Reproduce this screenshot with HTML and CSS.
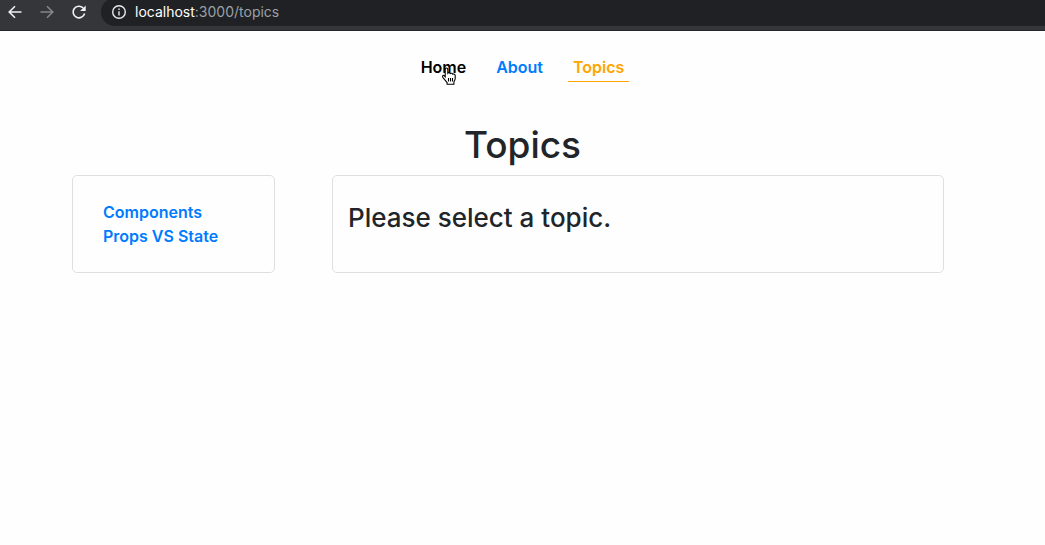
FILE: index.html
```html
<!DOCTYPE html>
<html lang="en">
<head>
<meta charset="utf-8">
<meta name="viewport" content="width=device-width, initial-scale=1">
<title>Topics</title>
<link rel="stylesheet" href="styles.css">
</head>
<body>
<div class="toolbar">
  <button class="tool" type="button" aria-label="Back">
    <svg viewBox="0 0 16 16" width="16" height="16"><path d="M14.5 8H2.5M8 2.2L2.2 8L8 13.8"/></svg>
  </button>
  <button class="tool tool-off" type="button" aria-label="Forward" disabled>
    <svg viewBox="0 0 16 16" width="16" height="16"><path d="M1.5 8H13.5M8 2.2L13.8 8L8 13.8"/></svg>
  </button>
  <button class="tool" type="button" aria-label="Reload">
    <svg viewBox="0 0 16 16" width="16" height="16"><path d="M13.6 9.5A5.8 5.8 0 1 1 12.2 4"/><path class="solid" d="M14.7 1.4V7H9.1Z"/></svg>
  </button>
  <div class="omnibox">
    <svg class="info" viewBox="0 0 16 16" width="16" height="16"><circle cx="8" cy="8" r="6.3"/><path d="M8 7.2V11.4M8 4.4V6"/></svg>
    <div class="address" role="textbox" aria-label="Address" contenteditable="true" spellcheck="false"><span class="host">localhost</span>:3000/topics</div>
  </div>
</div>
<nav class="nav">
  <a class="nav-link hovered" href="#home">Home
    <svg class="pointer" viewBox="0 0 16 18" width="16" height="18"><path d="M4.2 9.8V2.4C4.2 .5 6.8 .5 6.8 2.4V6.2C7.6 5.3 9 5.6 9.3 6.6C10.2 5.9 11.5 6.2 11.8 7.2C12.9 6.7 14.2 7.4 14.2 8.6V11.5C14.2 13.2 13 14.3 12.9 15V17.3H6.1V15.6C5.1 14 3.3 12.2 2 10.6C.7 8.9 2.3 7.7 3.4 8.8Z"/><path d="M7.5 11V14.5M9.5 11V14.5M11.5 11V14.5"/></svg>
  </a>
  <a class="nav-link" href="#about">About</a>
  <a class="nav-link active" href="#topics" aria-current="page">Topics</a>
</nav>
<main class="page">
  <h1 class="title">Topics</h1>
  <div class="columns">
    <ul class="card topics">
      <li><a href="#components">Components</a></li>
      <li><a href="#props">Props VS State</a></li>
    </ul>
    <section class="card detail">
      <h3 class="prompt">Please select a topic.</h3>
    </section>
  </div>
</main>
</body>
</html>
```
FILE: styles.css
```css
* { box-sizing: border-box; }
body {
  margin: 0;
  background: #fefefe;
  color: #212529;
  font-family: Inter, "Liberation Sans", sans-serif;
  font-size: 16px;
  line-height: 24px;
}
a { color: #007bff; text-decoration: none; font-weight: 600; }
.toolbar {
  display: flex;
  align-items: flex-start;
  height: 31px;
  padding-left: 7px;
  background: #35363a;
  border-bottom: 1px solid #242528;
  overflow: hidden;
}
.tool {
  width: 16px;
  height: 16px;
  margin: 4px 16px 0 0;
  padding: 0;
  border: 0;
  background: none;
  color: #f1f1f2;
}
.tool svg, .info { display: block; fill: none; stroke: currentColor; stroke-width: 1.6; }
.tool .solid { fill: currentColor; stroke: none; }
.tool-off { color: #85868a; }
.omnibox {
  flex: 1;
  display: flex;
  align-items: center;
  gap: 8px;
  height: 28px;
  margin-top: -2px;
  margin-left: -2px;
  padding-left: 10px;
  border-radius: 14px 0 0 14px;
  background: #202124;
  color: #9aa0a6;
}
.info { color: #e8eaed; stroke-width: 1.4; }
.address { font-size: 14px; line-height: 20px; outline: none; }
.host { color: #fff; }
.nav {
  display: flex;
  justify-content: center;
  gap: 20px;
  margin-top: 24px;
}
.nav-link { position: relative; padding: 0 5px 2px; border-bottom: 1px solid transparent; }
.hovered { color: #000; }
.active { color: #ffa500; border-color: #ffa500; }
.pointer { position: absolute; left: 25px; top: 12px; fill: #fff; stroke: #000; stroke-width: 1.1; }
.page { padding: 38px 101px 40px 72px; }
.title {
  margin: 0 -29px 5px 0;
  text-align: center;
  font-size: 37px;
  line-height: 50px;
  font-weight: 500;
}
.columns { display: grid; grid-template-columns: 203fr 612fr; gap: 57px; }
.card { margin: 0; border: 1px solid #dedfdf; border-radius: 5px; }
.topics { padding: 24px 30px; list-style: none; }
.detail { padding: 24px 15px; }
.prompt { margin: 0; font-size: 26px; line-height: 36px; font-weight: 500; }
```
